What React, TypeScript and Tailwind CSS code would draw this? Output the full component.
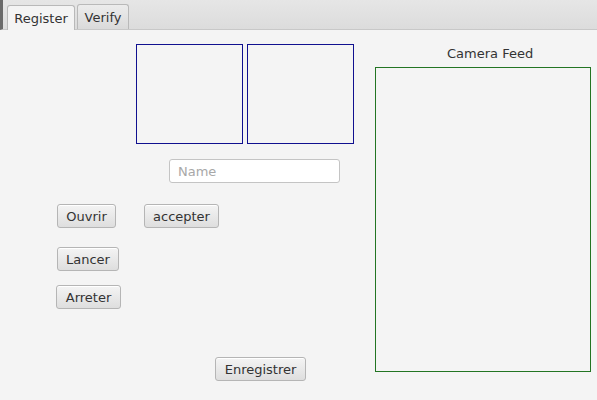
import React from 'react'

const font = { fontFamily: '"DejaVu Sans", Verdana, sans-serif' }

const FxButton: React.FC<{ label: string; className?: string }> = ({ label, className = '' }) => (
  <button
    className={`h-[24px] rounded-[3px] border border-[#b5b5b5] bg-gradient-to-b from-[#f4f4f4] to-[#dedede] text-[13px] text-[#333333] shadow-[inset_0_1px_0_#ffffff] flex items-center justify-center pt-px ${className}`}
  >
    {label}
  </button>
)

export default function App() {
  return (
    <div className="w-[597px] h-[400px] bg-[#f4f4f4] overflow-hidden" style={font}>
      {/* Tab header */}
      <div className="h-[30px] bg-gradient-to-b from-[#e6e6e6] to-[#dcdcdc] border-l-[3px] border-[#6a6a6a] border-b border-b-[#c8c8c8] flex items-end pl-[4px] gap-[2px]">
        <div className="h-[25px] w-[68px] bg-[#f4f4f4] border border-b-0 border-[#b9b9b9] rounded-t-[3px] flex items-center justify-center pt-[2px] text-[13px] text-[#333333] -mb-px">
          Register
        </div>
        <div className="h-[25px] w-[52px] bg-gradient-to-b from-[#ececec] to-[#dadada] border border-b-0 border-[#b9b9b9] rounded-t-[3px] flex items-center justify-center pt-[2px] text-[13px] text-[#333333]">
          Verify
        </div>
      </div>

      <div className="flex">
        {/* Left panel */}
        <div className="w-[375px] flex flex-col pt-[14px]">
          <div className="flex gap-[4px] pl-[136px]">
            <div className="w-[107px] h-[100px] border border-[#10108f]" />
            <div className="w-[107px] h-[100px] border border-[#10108f]" />
          </div>

          <div className="mt-[15px] ml-[169px] w-[171px] h-[24px] bg-white border border-[#c4c4c4] rounded-[3px] flex items-center pl-[8px] pt-px text-[13px] text-[#a8a8a8]">
            Name
          </div>

          <div className="mt-[21px] flex">
            <FxButton label="Ouvrir" className="ml-[57px] w-[59px]" />
            <FxButton label="accepter" className="ml-[28px] w-[75px]" />
          </div>

          <FxButton label="Lancer" className="mt-[19px] ml-[57px] w-[62px]" />
          <FxButton label="Arreter" className="mt-[14px] ml-[56px] w-[65px]" />
          <FxButton label="Enregistrer" className="mt-[48px] ml-[215px] w-[91px]" />
        </div>

        {/* Camera feed */}
        <div className="flex flex-col pt-[15px]">
          <div className="h-[22px] pl-[72px] text-[13px] text-[#333333] leading-[18px]">Camera Feed</div>
          <div className="w-[216px] h-[305px] border border-[#237523]" />
        </div>
      </div>
    </div>
  )
}
